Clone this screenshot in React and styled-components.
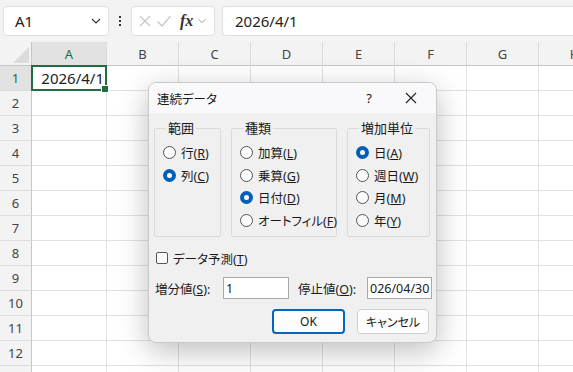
import React from "react";
import styled, { createGlobalStyle } from "styled-components";

const Global = createGlobalStyle`
  html, body { margin: 0; padding: 0; background: #ffffff; }
  body { font-family: "Noto Sans", "Noto Sans CJK JP", sans-serif; }
`;

const COLS = ["A", "B", "C", "D", "E", "F", "G", "H"];
const ROWS = Array.from({ length: 13 }, (_, i) => i + 1);

export default function App() {
  return (
    <Page>
      <Global />
      <FormulaBar>
        <NameBox>
          <span>A1</span>
          <Chevron size={12} />
        </NameBox>
        <Dots>
          <i />
          <i />
          <i />
        </Dots>
        <ActionBox>
          <svg width="14" height="14" viewBox="0 0 14 14">
            <path d="M2 2 L12 12 M12 2 L2 12" stroke="#c4c4c4" strokeWidth="1.2" fill="none" />
          </svg>
          <svg width="16" height="14" viewBox="0 0 16 14">
            <path d="M1.5 7.5 L6 12 L14.5 2" stroke="#c4c4c4" strokeWidth="1.2" fill="none" />
          </svg>
          <Fx>fx</Fx>
          <Chevron size={10} color="#999" />
        </ActionBox>
        <FormulaInput>2026/4/1</FormulaInput>
      </FormulaBar>

      <Sheet>
        <Corner>
          <svg width="16" height="16" viewBox="0 0 16 16">
            <path d="M16 0 L16 16 L0 16 Z" fill="#dcdcdc" />
          </svg>
        </Corner>
        {COLS.map((c) => (
          <ColHead key={c} $active={c === "A"}>
            {c}
          </ColHead>
        ))}
        {ROWS.map((r) => (
          <React.Fragment key={r}>
            <RowHead $active={r === 1}>{r < 13 ? r : ""}</RowHead>
            {COLS.map((c) => (
              <Cell key={c}>
                {r === 1 && c === "A" && (
                  <Selected>
                    2026/4/1
                    <Handle />
                  </Selected>
                )}
              </Cell>
            ))}
          </React.Fragment>
        ))}
      </Sheet>

      <Dialog>
        <TitleBar>
          <Title>連続データ</Title>
          <TitleButtons>
            <Help>?</Help>
            <svg width="12" height="12" viewBox="0 0 12 12">
              <path d="M1 1 L11 11 M11 1 L1 11" stroke="#222" strokeWidth="1.1" fill="none" />
            </svg>
          </TitleButtons>
        </TitleBar>
        <Body>
          <Groups>
            <Group $w={67}>
              <Legend>範囲</Legend>
              <Radio label="行" k="R" />
              <Radio label="列" k="C" checked />
            </Group>
            <Group $w={106}>
              <Legend>種類</Legend>
              <Radio label="加算" k="L" />
              <Radio label="乗算" k="G" />
              <Radio label="日付" k="D" checked />
              <Radio label="オートフィル" k="F" />
            </Group>
            <Group $w={83}>
              <Legend>増加単位</Legend>
              <Radio label="日" k="A" checked />
              <Radio label="週日" k="W" />
              <Radio label="月" k="M" />
              <Radio label="年" k="Y" />
            </Group>
          </Groups>
          <CheckRow>
            <CheckBox />
            <span>
              データ予測(<u>T</u>)
            </span>
          </CheckRow>
          <FieldRow>
            <FieldLabel $w={68}>
              増分値(<u>S</u>):
            </FieldLabel>
            <TextBox $w={66}>1</TextBox>
            <FieldLabel $w={69} $ml={9}>
              停止値(<u>O</u>):
            </FieldLabel>
            <TextBox $w={65}>026/04/30</TextBox>
          </FieldRow>
          <ButtonRow>
            <Button $primary>OK</Button>
            <Button>キャンセル</Button>
          </ButtonRow>
        </Body>
      </Dialog>
    </Page>
  );
}

function Chevron({ size, color = "#333" }) {
  return (
    <svg width={size} height={size} viewBox="0 0 12 12">
      <path d="M2 4 L6 8 L10 4" stroke={color} strokeWidth="1.2" fill="none" />
    </svg>
  );
}

function Radio({ label, k, checked }) {
  return (
    <RadioRow>
      <RadioDot $checked={checked} />
      <span>
        {label}(<u>{k}</u>)
      </span>
    </RadioRow>
  );
}

const Page = styled.div`
  position: relative;
  width: 573px;
  height: 372px;
  overflow: hidden;
  background: #fff;
`;

const FormulaBar = styled.div`
  display: flex;
  align-items: center;
  height: 42px;
  padding: 0 0 0 3px;
  background: #f3f3f3;
  box-sizing: border-box;
`;

const WhiteBox = styled.div`
  height: 30px;
  box-sizing: border-box;
  background: #fff;
  border: 1px solid #e0e0e0;
  border-radius: 4px;
  display: flex;
  align-items: center;
`;

const NameBox = styled(WhiteBox)`
  width: 106px;
  padding: 0 6px 0 11px;
  justify-content: space-between;
  font-size: 15px;
  color: #222;
`;

const Dots = styled.div`
  width: 22px;
  display: flex;
  flex-direction: column;
  align-items: center;
  gap: 2px;
  & i {
    width: 2px;
    height: 2px;
    background: #333;
  }
`;

const ActionBox = styled(WhiteBox)`
  width: 84px;
  padding: 0 4px 0 6px;
  gap: 4px;
`;

const Fx = styled.span`
  font-family: "Liberation Serif", serif;
  font-style: italic;
  font-weight: bold;
  font-size: 16px;
  color: #333;
  margin-left: 4px;
  line-height: 1;
`;

const FormulaInput = styled(WhiteBox)`
  flex: 1;
  margin-left: 7px;
  border-right: none;
  border-radius: 4px 0 0 4px;
  padding-left: 12px;
  font-size: 15px;
  color: #222;
`;

const Sheet = styled.div`
  display: grid;
  grid-template-columns: 32px 75px repeat(7, 72px);
  grid-template-rows: 24px repeat(13, 25px);
`;

const HeadBase = styled.div`
  background: ${(p) => (p.$active ? "#e2e2e2" : "#f3f3f3")};
  color: ${(p) => (p.$active ? "#1d6b3e" : "#444")};
  font-size: 13px;
  display: flex;
  align-items: center;
  justify-content: center;
  box-sizing: border-box;
`;

const Corner = styled(HeadBase)`
  justify-content: flex-end;
  align-items: flex-end;
  padding: 0 2px 2px 0;
  border-right: 1px solid #c6c6c6;
  border-bottom: 1px solid #c6c6c6;
`;

const ColHead = styled(HeadBase)`
  border-right: 1px solid #dcdcdc;
  border-bottom: 1px solid #c6c6c6;
`;

const RowHead = styled(HeadBase)`
  border-right: 1px solid #c6c6c6;
  border-bottom: 1px solid #dcdcdc;
`;

const Cell = styled.div`
  position: relative;
  border-right: 1px solid #e1e1e1;
  border-bottom: 1px solid #e1e1e1;
`;

const Selected = styled.div`
  position: absolute;
  inset: -1px -1px -1px -1px;
  border: 2px solid #1f6e43;
  display: flex;
  align-items: center;
  justify-content: flex-end;
  padding-right: 1px;
  font-size: 15px;
  color: #222;
  z-index: 1;
`;

const Handle = styled.span`
  position: absolute;
  right: -4px;
  bottom: -4px;
  width: 6px;
  height: 6px;
  background: #1f6e43;
  border: 1px solid #fff;
`;

const Dialog = styled.div`
  position: absolute;
  left: 148px;
  top: 82px;
  width: 289px;
  height: 261px;
  box-sizing: border-box;
  background: #f0f0f0;
  border: 1px solid #c9c9c9;
  border-radius: 8px;
  box-shadow: 0 8px 30px rgba(0, 0, 0, 0.26);
  overflow: hidden;
  font-family: "Noto Sans", "Noto Sans CJK JP", sans-serif;
  font-feature-settings: "palt";
  font-size: 12px;
  color: #1a1a1a;
  z-index: 5;
`;

const TitleBar = styled.div`
  height: 30px;
  background: #f9f9fb;
  display: flex;
  align-items: center;
  justify-content: space-between;
  padding: 0 19px 0 8px;
`;

const Title = styled.div`
  font-size: 12.5px;
`;

const TitleButtons = styled.div`
  display: flex;
  align-items: center;
  gap: 33px;
`;

const Help = styled.span`
  font-size: 13px;
`;

const Body = styled.div`
  padding: 7px 6px 0 5px;
  display: flex;
  flex-direction: column;
`;

const Groups = styled.div`
  display: flex;
  gap: 10px;
  height: 117px;
`;

const Group = styled.fieldset`
  margin: 0;
  min-width: 0;
  flex: none;
  width: ${(p) => p.$w}px;
  box-sizing: border-box;
  border: 1px solid #dadada;
  border-radius: 2px;
  padding: 5px 0 0 8px;
  display: flex;
  flex-direction: column;
`;

const Legend = styled.legend`
  padding: 0 2px;
  margin-left: 3px;
  font-size: 13px;
  line-height: 16px;
`;

const RadioRow = styled.label`
  display: flex;
  align-items: center;
  gap: 5px;
  height: 22.7px;
  white-space: nowrap;
  font-size: 12.5px;
  & u {
    text-underline-offset: 1px;
  }
`;

const RadioDot = styled.span`
  width: 13px;
  height: 13px;
  box-sizing: border-box;
  border-radius: 50%;
  flex: none;
  border: ${(p) => (p.$checked ? "none" : "1px solid #555")};
  background: ${(p) => (p.$checked ? "#005fb8" : "#fbfbfb")};
  display: flex;
  align-items: center;
  justify-content: center;
  &::after {
    content: "";
    width: 5px;
    height: 5px;
    border-radius: 50%;
    background: #fff;
    display: ${(p) => (p.$checked ? "block" : "none")};
  }
`;

const CheckRow = styled.div`
  display: flex;
  align-items: center;
  gap: 5px;
  margin-top: 13px;
  padding-left: 2px;
  height: 16px;
  font-size: 12.5px;
`;

const CheckBox = styled.span`
  width: 12px;
  height: 12px;
  box-sizing: border-box;
  border: 1px solid #555;
  border-radius: 2px;
  background: #fbfbfb;
`;

const FieldRow = styled.div`
  display: flex;
  align-items: center;
  margin-top: 11px;
  height: 22px;
  padding-left: 1px;
`;

const FieldLabel = styled.span`
  width: ${(p) => p.$w}px;
  margin-left: ${(p) => p.$ml || 0}px;
  flex: none;
  white-space: nowrap;
  font-size: 12.5px;
`;

const TextBox = styled.div`
  width: ${(p) => p.$w}px;
  flex: none;
  height: 22px;
  box-sizing: border-box;
  background: #fff;
  border: 1px solid #a8a8a8;
  padding-left: 2px;
  display: flex;
  align-items: center;
  font-size: 12.5px;
  white-space: nowrap;
  overflow: hidden;
`;

const ButtonRow = styled.div`
  display: flex;
  justify-content: flex-end;
  gap: 12px;
  margin-top: 10px;
  padding-right: 1px;
`;

const Button = styled.button`
  width: ${(p) => (p.$primary ? 73 : 72)}px;
  height: 25px;
  box-sizing: border-box;
  border-radius: 4px;
  font-family: inherit;
  font-feature-settings: "palt";
  font-size: 12px;
  color: #1a1a1a;
  background: #fdfdfd;
  border: ${(p) => (p.$primary ? "2px solid #0067c0" : "1px solid #d0d0d0")};
  padding: 0;
`;
